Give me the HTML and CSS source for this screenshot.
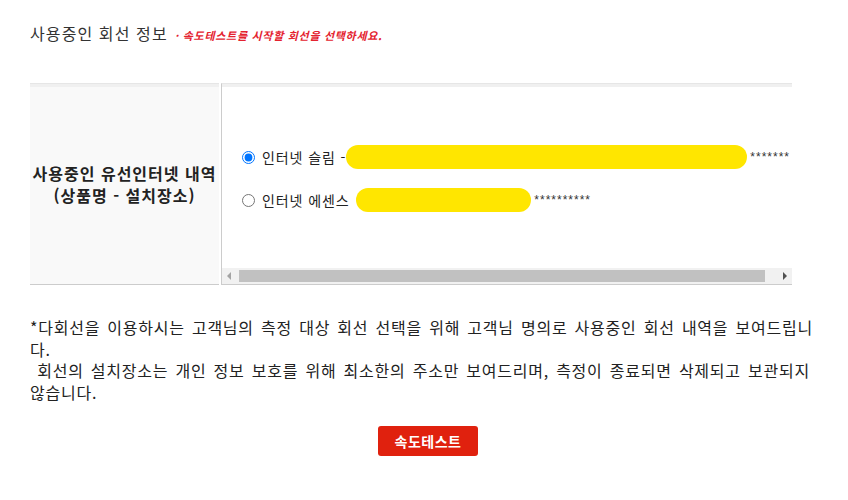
FILE: index.html
```html
<!DOCTYPE html>
<html lang="ko">
<head>
<meta charset="utf-8">
<link rel="stylesheet" href="styles.css">
</head>
<body>
<div class="page">
  <div class="head">
    <h2 class="title">사용중인 회선 정보</h2>
    <span class="hint">· 속도테스트를 시작할 회선을 선택하세요.</span>
  </div>

  <div class="table">
    <div class="th">
      <div class="th-text">사용중인 유선인터넷 내역<br>(상품명 - 설치장소)</div>
    </div>
    <div class="td">
      <div class="scroll">
        <div class="rows">
          <label class="row">
            <input type="radio" name="line" checked>
            <span class="lbl">인터넷 슬림 -</span><span class="mask m1"></span><span class="stars">*******</span>
          </label>
          <label class="row">
            <input type="radio" name="line">
            <span class="lbl">인터넷 에센스&nbsp;</span><span class="mask m2"></span><span class="stars">**********</span>
          </label>
        </div>
      </div>
      <div class="hbar">
        <span class="arrow left"></span>
        <span class="thumb"></span>
        <span class="arrow right"></span>
      </div>
    </div>
  </div>

  <p class="notes">*다회선을 이용하시는 고객님의 측정 대상 회선 선택을 위해 고객님 명의로 사용중인 회선 내역을 보여드립니다.<br>&nbsp;회선의 설치장소는 개인 정보 보호를 위해 최소한의 주소만 보여드리며, 측정이 종료되면 삭제되고 보관되지 않습니다.</p>

  <div class="actions">
    <button class="btn" type="button">속도테스트</button>
  </div>
</div>
</body>
</html>
```

FILE: styles.css
```css
html, body {
  margin: 0;
  padding: 0;
  background: #fff;
}
body {
  font-family: "Noto Sans CJK KR", "Noto Sans", sans-serif;
  color: #222;
}
.page {
  padding: 20px 26px 0 30px;
}
.head {
  display: flex;
  align-items: baseline;
  height: 26px;
}
.title {
  margin: 0;
  font-size: 16px;
  font-weight: normal;
  letter-spacing: 1.1px;
  color: #333;
  line-height: 26px;
}
.hint {
  margin-left: 7px;
  font-size: 11px;
  font-style: italic;
  font-weight: bold;
  letter-spacing: 0.7px;
  color: #e4232f;
}
.table {
  margin-top: 37px;
  width: 762px;
  display: flex;
  gap: 2px;
  height: 202px;
}
.th {
  width: 189px;
  flex: none;
  background: #f9f9f9;
  border-top: 1px solid #e6e6e6;
  box-shadow: inset 0 3px 0 #f0f0f0;
  border-bottom: 1px solid #cccccc;
  display: flex;
  align-items: center;
  justify-content: center;
}
.th-text {
  font-size: 16px;
  font-weight: bold;
  letter-spacing: 1px;
  color: #222;
  text-align: center;
  line-height: 22px;
  white-space: nowrap;
  margin-top: 0;
}
.td {
  flex: 1;
  min-width: 0;
  border-top: 1px solid #e6e6e6;
  border-left: 1px solid #cccccc;
  border-bottom: 1px solid #cccccc;
  display: flex;
  flex-direction: column;
  background: #fff;
}
.scroll {
  flex: 1;
  overflow: hidden;
  border-top: 3px solid #f0f0f0;
  display: flex;
  align-items: center;
}
.rows {
  display: flex;
  flex-direction: column;
  gap: 19px;
  padding-left: 20px;
  margin-top: 2px;
}
.row {
  display: flex;
  align-items: center;
  white-space: nowrap;
  height: 24px;
  font-size: 14px;
  letter-spacing: 0.9px;
  color: #222;
}
.row input {
  margin: 0 7px 0 0;
  width: 13px;
  height: 13px;
  flex: none;
}
.lbl {
  line-height: 24px;
}
.mask {
  display: inline-block;
  flex: none;
  height: 24px;
  border-radius: 12px;
  background: #ffe600;
}
.m1 { width: 401px; }
.m2 { width: 175px; margin-left: 2px; }
.stars {
  font-family: "Liberation Sans", Arial, sans-serif;
  font-size: 12px;
  letter-spacing: 1px;
  color: #333;
  margin-left: 3px;
  line-height: 24px;
}
.hbar {
  height: 16px;
  flex: none;
  background: #f1f1f1;
  display: flex;
  align-items: center;
}
.arrow {
  width: 17px;
  height: 16px;
  flex: none;
  position: relative;
}
.arrow.left::before,
.arrow.right::before {
  content: "";
  position: absolute;
  top: 4px;
  border-top: 4px solid transparent;
  border-bottom: 4px solid transparent;
}
.arrow.left::before {
  left: 5px;
  border-right: 4px solid #a3a3a3;
}
.arrow.right::before {
  left: 8px;
  border-left: 4px solid #505050;
}
.thumb {
  flex: 1;
  height: 12px;
  background: #c1c1c1;
  margin-right: 10px;
}
.notes {
  margin: 32px 0 0;
  font-size: 16px;
  line-height: 21.5px;
  letter-spacing: 0.75px;
  word-spacing: 2px;
  color: #222;
}
.actions {
  display: flex;
  justify-content: center;
  padding-left: 4px;
  margin-top: 23px;
}
.btn {
  width: 100px;
  height: 30px;
  border: none;
  border-radius: 3px;
  background: #e0210e;
  color: #fff;
  font-family: "Noto Sans CJK KR", sans-serif;
  font-size: 14px;
  font-weight: bold;
  letter-spacing: 0.5px;
  padding: 0;
}
```
